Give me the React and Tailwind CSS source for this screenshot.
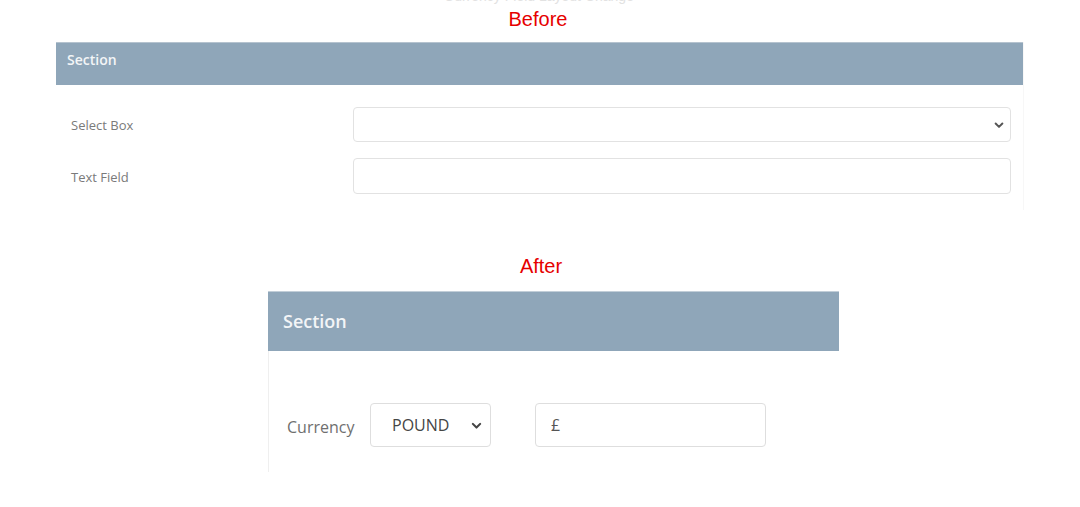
import React from "react";

function Chevron({ className }) {
  return (
    <svg viewBox="0 0 16 16" className={className} fill="none" stroke="currentColor" strokeWidth="2.6" strokeLinecap="round" strokeLinejoin="round">
      <path d="M3.5 6l4.5 4.5L12.5 6" />
    </svg>
  );
}

export default function App() {
  return (
    <div className="w-[1080px] h-[507px] bg-white overflow-hidden relative" style={{ fontFamily: '"Open Sans", "Noto Sans", sans-serif' }}>
      <div className="h-[5px] overflow-hidden flex justify-center">
        <div className="-mt-[11px] text-[14px] leading-[14px] text-[#e2e2e2] ml-[-2px]" style={{ fontFamily: '"Liberation Sans", Arial, sans-serif' }}>Currency Field Layout Change</div>
      </div>
      <div className="h-[29px] flex justify-center items-start text-[20px] leading-[24px] text-[#e60000]" style={{ fontFamily: '"Liberation Sans", Arial, sans-serif' }}>
        <span className="mt-[2px] mr-[4px]">Before</span>
      </div>
      <div className="h-[8px]" />
      <div className="ml-[56px] w-[968px] h-[168px] border-r border-[#f7f7f7]">
        <div className="h-[43px] bg-[#8fa6b9] flex items-start pt-[6px] pl-[11px] border-t border-[#b5c3cf]">
          <span className="text-[14px] font-semibold text-[#f3f5f7]">Section</span>
        </div>
        <div className="pt-[22px] flex flex-col gap-[16px]">
          <div className="flex items-center h-[35px]">
            <div className="w-[297px] pl-[15px] pt-[3px] text-[13px] text-[#7a7a7a]">Select Box</div>
            <div className="w-[658px] h-[35px] border border-[#e2e2e2] rounded-[4px] flex items-center justify-end pr-[5px]">
              <Chevron className="w-[12px] h-[12px] text-[#555]" />
            </div>
          </div>
          <div className="flex items-center h-[36px]">
            <div className="w-[297px] pl-[15px] pt-[3px] text-[13px] text-[#7a7a7a]">Text Field</div>
            <div className="w-[658px] h-[36px] border border-[#e2e2e2] rounded-[4px]" />
          </div>
        </div>
      </div>
      <div className="h-[70px] flex justify-center items-end text-[20px] leading-[24px] text-[#e60000]" style={{ fontFamily: '"Liberation Sans", Arial, sans-serif' }}>
        <span className="mb-[2px] ml-[2px]">After</span>
      </div>
      <div className="h-[11px]" />
      <div className="ml-[268px] w-[571px]">
        <div className="h-[60px] bg-[#8fa6b9] flex items-center pl-[15px] border-t border-[#c2ced8]">
          <span className="text-[18px] font-semibold text-[#f3f5f7]">Section</span>
        </div>
        <div className="h-[121px] border-l border-[#efefef] pt-[52px]">
          <div className="flex items-center h-[44px]">
            <div className="pl-[18px] pt-[3px] w-[101px] text-[16px] text-[#6f6f6f]">Currency</div>
            <div className="w-[121px] h-[44px] border border-[#dedede] rounded-[4px] flex items-center pl-[21px] pr-[7px] justify-between">
              <span className="text-[16px] text-[#454545]">POUND</span>
              <Chevron className="w-[13px] h-[13px] text-[#444]" />
            </div>
            <div className="ml-[44px] w-[231px] h-[44px] border border-[#dedede] rounded-[4px] flex items-center pl-[15px]">
              <span className="text-[16px] text-[#555]">£</span>
            </div>
          </div>
        </div>
      </div>
    </div>
  );
}
